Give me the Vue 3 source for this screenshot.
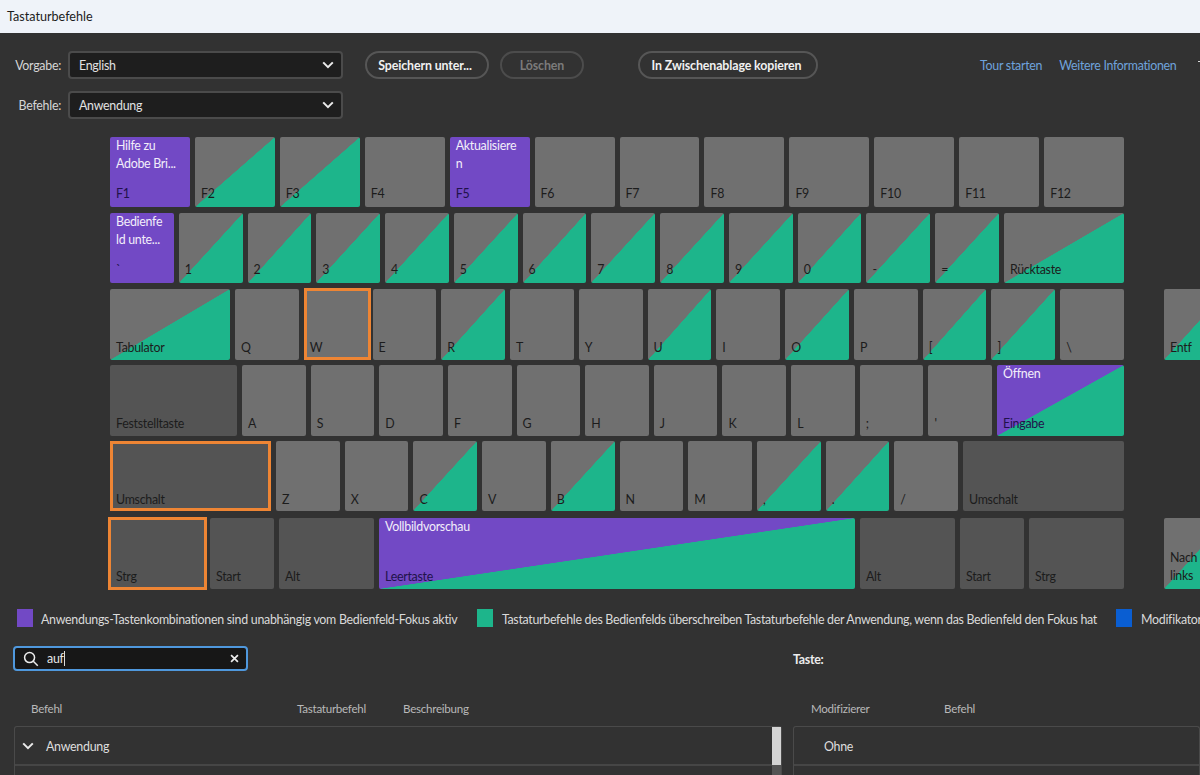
<script setup>
const rows = [
  { name: 'r1', keys: [
    { l: 'F1', t: 'Hilfe zu Adobe Bri...', c: 'purple' }, { l: 'F2', c: 'green' }, { l: 'F3', c: 'green' }, { l: 'F4' },
    { l: 'F5', t: 'Aktualisiere n', c: 'purple' }, { l: 'F6' }, { l: 'F7' }, { l: 'F8' }, { l: 'F9' }, { l: 'F10' }, { l: 'F11' }, { l: 'F12' }
  ] },
  { name: 'r2', keys: [
    { l: '`', t: 'Bedienfe ld unte...', c: 'purple' }, ...['1','2','3','4','5','6','7','8','9','0','-','='].map(l => ({ l, c: 'green' })),
    { l: 'Rücktaste', c: 'green', w: 'w120' }
  ] },
  { name: 'r3', side: 'Entf', keys: [
    { l: 'Tabulator', c: 'green', w: 'w120' }, { l: 'Q' }, { l: 'W', sel: 'sel-w' }, { l: 'E' }, { l: 'R', c: 'green' }, { l: 'T' }, { l: 'Y' },
    { l: 'U', c: 'green' }, { l: 'I' }, { l: 'O', c: 'green' }, { l: 'P' }, { l: '[', c: 'green' }, { l: ']', c: 'green' }, { l: '\\' }
  ] },
  { name: 'r4', keys: [
    { l: 'Feststelltaste', c: 'mod', w: 'w127' }, ...['A','S','D','F','G','H','J','K','L',';',"'"].map(l => ({ l })),
    { l: 'Eingabe', t: 'Öffnen', c: 'both', w: 'w127' }
  ] },
  { name: 'r5', keys: [
    { l: 'Umschalt', c: 'mod', w: 'w161', sel: 'sel-in' }, { l: 'Z' }, { l: 'X' }, { l: 'C', c: 'green' }, { l: 'V' }, { l: 'B', c: 'green' }, { l: 'N' }, { l: 'M' },
    { l: ',', c: 'green' }, { l: '.', c: 'green' }, { l: '/' }, { l: 'Umschalt', c: 'mod', w: 'w161' }
  ] },
  { name: 'r6', side: 'Nach links', keys: [
    { l: 'Strg', c: 'mod', w: 'w95', sel: 'sel-s' }, { l: 'Start', c: 'mod' }, { l: 'Alt', c: 'mod', w: 'w95' },
    { l: 'Leertaste', t: 'Vollbildvorschau', c: 'both', w: 'w476' },
    { l: 'Alt', c: 'mod', w: 'w95' }, { l: 'Start', c: 'mod' }, { l: 'Strg', c: 'mod', w: 'w95' }
  ] }
]
</script>

<template>
  <div class="app">
    <header class="title">Tastaturbefehle</header>

    <section class="toolbar">
      <div class="line">
        <label class="lbl">Vorgabe:</label>
        <div class="select"><span>English</span>
          <svg class="chev" viewBox="0 0 12 8"><path d="M1.2 1.4 6 6.2l4.8-4.8" /></svg>
        </div>
        <button class="btn b-save">Speichern unter...</button>
        <button class="btn b-del">Löschen</button>
        <button class="btn b-copy">In Zwischenablage kopieren</button>
        <a class="link l-tour">Tour starten</a>
        <a class="link l-more">Weitere Informationen</a>
        <i class="edge"></i>
      </div>
      <div class="line">
        <label class="lbl">Befehle:</label>
        <div class="select"><span>Anwendung</span>
          <svg class="chev" viewBox="0 0 12 8"><path d="M1.2 1.4 6 6.2l4.8-4.8" /></svg>
        </div>
      </div>
    </section>

    <section class="keyboard">
      <div v-for="r in rows" :key="r.name" class="row" :class="r.name">
        <div class="keys">
          <div v-for="(k, i) in r.keys" :key="i" class="key" :class="[k.c, k.w, k.sel]">
            <span v-if="k.t" class="top">{{ k.t }}</span>
            <span class="bottom">{{ k.l }}</span>
          </div>
        </div>
        <div v-if="r.side" class="key green side" :class="{ two: r.side === 'Nach links' }">
          <span class="bottom">{{ r.side }}</span>
        </div>
      </div>
    </section>

    <section class="legend">
      <i class="sw s-purple"></i>
      <span class="lg1">Anwendungs-Tastenkombinationen sind unabhängig vom Bedienfeld-Fokus aktiv</span>
      <i class="sw s-green"></i>
      <span class="lg2">Tastaturbefehle des Bedienfelds überschreiben Tastaturbefehle der Anwendung, wenn das Bedienfeld den Fokus hat</span>
      <i class="sw s-blue"></i>
      <span>Modifikatortasten</span>
    </section>

    <section class="lower">
      <div class="col-left">
        <div class="search">
          <svg class="mag" viewBox="0 0 18 18"><circle cx="7.4" cy="7.4" r="5.6" /><path d="m11.6 11.6 5 5" /></svg>
          <span class="query">auf</span><span class="caret"></span>
          <svg class="clear" viewBox="0 0 10 10"><path d="m1.2 1.2 7.6 7.6M8.8 1.2 1.2 8.8" /></svg>
        </div>
        <div class="heads">
          <span class="h-cmd">Befehl</span>
          <span class="h-key">Tastaturbefehl</span>
          <span>Beschreibung</span>
        </div>
        <div class="panel">
          <div class="tree-row">
            <svg class="tree-chev" viewBox="0 0 12 8"><path d="M1.2 1.4 6 6.2l4.8-4.8" /></svg>
            <span>Anwendung</span>
          </div>
          <div class="scroll"><div class="thumb"></div></div>
        </div>
      </div>
      <div class="col-right">
        <div class="taste">Taste:</div>
        <div class="heads heads-r">
          <span class="h-mod">Modifizierer</span>
          <span>Befehl</span>
        </div>
        <div class="panel panel-r">
          <div class="tree-row ohne">Ohne</div>
        </div>
      </div>
    </section>
  </div>
</template>

<style>
html, body { margin: 0; background: #323232; overflow: hidden; }
</style>

<style scoped>
.app {
  width: 1200px;
  height: 775px;
  overflow: hidden;
  background: #323232;
  color: #e4e4e4;
  font-family: Lato, "Open Sans", sans-serif;
  font-size: 12.4px;
  letter-spacing: -0.27px;
}
.title {
  height: 33px;
  line-height: 33px;
  padding-left: 7px;
  background: #eff3f9;
  color: #1c1c1c;
  font-size: 12.6px;
  letter-spacing: 0;
}
.toolbar { padding-top: 18px; display: flex; flex-direction: column; gap: 12px; }
.line { position: relative; display: flex; align-items: center; height: 28px; }
.edge { position: absolute; right: 0; top: 10px; width: 2px; height: 1px; background: #dcdcdc; }
.lbl { width: 61px; text-align: right; margin-right: 7px; color: #d6d6d6; }
.select {
  width: 275px;
  height: 28px;
  box-sizing: border-box;
  display: flex;
  align-items: center;
  justify-content: space-between;
  padding: 0 7px 0 9px;
  background: #1e1e1e;
  border: 2px solid #4b4b4b;
  border-radius: 4px;
  color: #e2e2e2;
}
.chev { width: 12px; height: 8px; }
.chev path, .tree-chev path { fill: none; stroke: #eaeaea; stroke-width: 2; }
.btn {
  height: 28px;
  box-sizing: border-box;
  background: transparent;
  border: 2px solid #565656;
  border-radius: 14px;
  color: #f0f0f0;
  font: 700 12.4px Lato, "Open Sans", sans-serif;
  letter-spacing: -0.12px;
  padding: 0;
}
.b-save { width: 124px; margin-left: 22px; padding-right: 4px; }
.b-del { width: 84px; margin-left: 11px; color: #7b7b7b; border-color: #4c4c4c; }
.b-copy { width: 180px; margin-left: 54px; padding-right: 3px; }
.link { color: #6fa3dc; }
.l-tour { margin-left: 162px; }
.l-more { margin-left: 17px; letter-spacing: -0.3px; }

.keyboard { padding: 18px 0 0 110px; }
.row { display: flex; margin-bottom: 6px; width: 1200px; }
.r3, .r4 { margin-bottom: 5px; }
.r5 { margin-bottom: 7px; }
.r6 { margin-bottom: 0; }
.keys { display: flex; gap: 5px; width: 1014px; flex: none; }
.key {
  position: relative;
  flex: 1 1 0;
  min-width: 0;
  height: 70px;
  box-sizing: border-box;
  background: #707070;
  border-radius: 2px;
  color: #1c1c1c;
}
.r3 .key, .r4 .key, .r6 .key { height: 71px; }
.w95 { flex: 0 0 95px; }
.w120 { flex: 0 0 120px; }
.w127 { flex: 0 0 127px; }
.w161 { flex: 0 0 161px; }
.w476 { flex: 0 0 476px; }
.mod { background: #545454; }
.purple { background: #7249c5; }
.green { background: linear-gradient(to bottom right, #707070 49.8%, #1db58b 50.2%); }
.both { background: linear-gradient(to bottom right, #7249c5 49.8%, #1db58b 50.2%); }
.top {
  position: absolute;
  left: 6px;
  right: 7px;
  top: 0;
  line-height: 18px;
  color: #f2eefa;
  overflow-wrap: anywhere;
}
.bottom { position: absolute; left: 6px; bottom: 5px; line-height: 16px; }
.r3 .bottom, .r4 .bottom, .r6 .bottom { bottom: 4px; }
.r5 .bottom { bottom: 3px; }
.purple .bottom, .both .bottom { color: #21124a; }
.sel-in { box-shadow: inset 0 0 0 3px #ee8534; border-radius: 0; }
.sel-w::after, .sel-s::after {
  content: "";
  position: absolute;
  border: 3px solid #ee8534;
  box-sizing: border-box;
}
.sel-w::after { inset: -1px -3px 0 0; }
.sel-s::after { inset: -1px -2px -1px -2px; }
.side { flex: 0 0 64px; margin-left: 40px; }
.two .bottom { width: 40px; line-height: 18px; }

.legend { display: flex; align-items: center; height: 18px; margin-top: 20px; padding-left: 17px; white-space: nowrap; color: #dadada; }
.legend span { padding-top: 2px; }
.sw { flex: none; width: 16px; height: 18px; margin-right: 8px; }
.s-purple { background: #7249c5; }
.s-green { background: #1db58b; margin-left: 19.5px; margin-right: 9px; }
.s-blue { background: #0a5ed2; margin-left: 19px; margin-right: 9px; }
.lg2 { letter-spacing: -0.3px; }

.lower { display: flex; margin-top: 19px; padding-left: 14px; }
.col-left { width: 768px; flex: none; }
.col-right { width: 407px; flex: none; margin-left: 11px; }
.search {
  width: 235px;
  height: 25px;
  margin-left: -1px;
  box-sizing: border-box;
  display: flex;
  align-items: center;
  padding-left: 8px;
  background: #171717;
  border: 2px solid #4f98dd;
  border-radius: 4px;
  color: #e6e6e6;
}
.mag { width: 16px; height: 16px; margin-right: 8px; }
.mag circle, .mag path { fill: none; stroke: #ececec; stroke-width: 1.7; }
.query { line-height: 16px; }
.caret { width: 1px; height: 15px; background: #dcdcdc; }
.clear { width: 9px; height: 9px; margin-left: auto; margin-right: 7px; }
.clear path { fill: none; stroke: #ececec; stroke-width: 1.9; }
.heads { display: flex; height: 16px; margin-top: 30px; line-height: 16px; color: #b9b9b9; font-size: 11.6px; }
.h-cmd { margin-left: 17px; width: 266px; }
.h-key { width: 106px; }
.heads-r { padding-left: 18px; }
.h-mod { width: 133px; }
.taste { height: 25px; line-height: 28px; font-weight: 700; color: #ececec; }
.panel {
  position: relative;
  height: 60px;
  margin-top: 9px;
  box-sizing: border-box;
  border: 1px solid #4a4a4a;
  border-bottom: 0;
  border-radius: 3px 3px 0 0;
}
.tree-row {
  display: flex;
  align-items: center;
  height: 39px;
  box-sizing: border-box;
  border-bottom: 2px solid #464646;
  padding-top: 1px;
  padding-left: 7px;
  color: #dedede;
}
.tree-chev { width: 12px; height: 8px; margin-right: 12px; }
.ohne { padding-left: 30px; }
.scroll { position: absolute; right: 0; top: 0; bottom: 0; width: 9px; background: #545454; }
.thumb { height: 38px; background: #d4d4d4; }
</style>
